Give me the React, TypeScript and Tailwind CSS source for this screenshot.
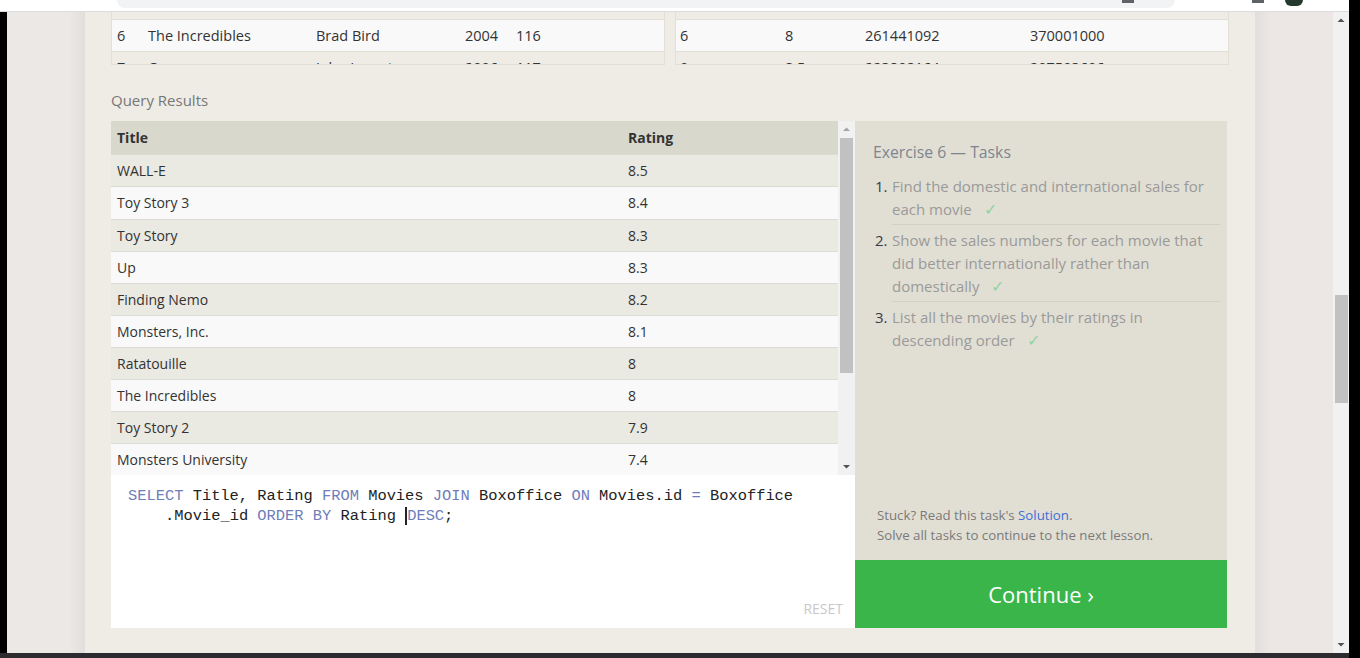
const movies = [
  { title: 'WALL-E', rating: '8.5' },
  { title: 'Toy Story 3', rating: '8.4' },
  { title: 'Toy Story', rating: '8.3' },
  { title: 'Up', rating: '8.3' },
  { title: 'Finding Nemo', rating: '8.2' },
  { title: 'Monsters, Inc.', rating: '8.1' },
  { title: 'Ratatouille', rating: '8' },
  { title: 'The Incredibles', rating: '8' },
  { title: 'Toy Story 2', rating: '7.9' },
  { title: 'Monsters University', rating: '7.4' },
  { title: 'Cars', rating: '7.2' },
  { title: 'Brave', rating: '7.2' },
]

const tasks = [
  'Find the domestic and international sales for each movie',
  'Show the sales numbers for each movie that did better internationally rather than domestically',
  'List all the movies by their ratings in descending order',
]

const sans = "font-['Open_Sans','Noto_Sans',sans-serif]"

function TopTables() {
  const left = [
    ['6', 'The Incredibles', 'Brad Bird', '2004', '116'],
    ['7', 'Cars', 'John Lasseter', '2006', '117'],
  ]
  const right = [
    ['6', '8', '261441092', '370001000'],
    ['9', '8.5', '223808164', '297503696'],
  ]
  const bg = (i: number) => (i === 0 ? 'bg-[#f9f9f9]' : 'bg-[#efece5]')
  return (
    <div className="flex h-[53px] gap-[10px] text-[14.5px] text-[#333]">
      <div className="h-full w-[554px] overflow-hidden border-x border-b border-[#e2dfd7]">
        <div className="h-[8px] border-b border-[#e2dfd7]" />
        {left.map((r, i) => (
          <div key={i} className={`flex h-[32px] items-center border-b border-[#e2dfd7] px-[5px] ${bg(i)}`}>
            <span className="w-[31px]">{r[0]}</span>
            <span className="w-[168px]">{r[1]}</span>
            <span className="w-[149px]">{r[2]}</span>
            <span className="w-[51px]">{r[3]}</span>
            <span>{r[4]}</span>
          </div>
        ))}
      </div>
      <div className="h-full w-[554px] overflow-hidden border-x border-b border-[#e2dfd7]">
        <div className="h-[8px] border-b border-[#e2dfd7]" />
        {right.map((r, i) => (
          <div key={i} className={`flex h-[32px] items-center border-b border-[#e2dfd7] px-[4px] ${bg(i)}`}>
            <span className="w-[105px]">{r[0]}</span>
            <span className="w-[80px]">{r[1]}</span>
            <span className="w-[165px]">{r[2]}</span>
            <span>{r[3]}</span>
          </div>
        ))}
      </div>
    </div>
  )
}

function ResultsTable() {
  return (
    <div className="flex h-[354px]">
      <div className="w-[727px] overflow-hidden text-[14px] text-[#333]">
        <div className="flex h-[33px] items-center bg-[#d9d8cd] px-[6px] font-bold">
          <span className="w-[511px]">Title</span>
          <span>Rating</span>
        </div>
        {movies.map((m, i) => (
          <div
            key={m.title}
            className={`flex items-center border-t border-[#dcdcd6] px-[6px] ${i === 1 ? 'h-[33px]' : 'h-[32px]'} ${i % 2 === 0 ? 'bg-[#eae9e2]' : 'bg-[#f9f9f9]'}`}
          >
            <span className="w-[511px]">{m.title}</span>
            <span>{m.rating}</span>
          </div>
        ))}
      </div>
      <div className="flex w-[17px] flex-col items-center bg-[#f1f1f1]">
        <svg width="17" height="17" viewBox="0 0 17 17">
          <path d="M5 10 L8.5 6.5 L12 10 Z" fill="#a3a3a3" />
        </svg>
        <div className="h-[235px] w-[13px] bg-[#c1c1c1]" />
        <div className="flex-1" />
        <svg width="17" height="17" viewBox="0 0 17 17">
          <path d="M5 7 L8.5 10.5 L12 7 Z" fill="#505050" />
        </svg>
      </div>
    </div>
  )
}

function Editor() {
  const kw = 'text-[#6f7db9]'
  return (
    <div className="relative h-[153px] bg-white">
      <div className="px-[17px] pt-[11px] font-['Liberation_Mono','DejaVu_Sans_Mono',monospace] text-[15.4px] leading-[20px] text-[#222]">
        <div className="whitespace-pre">
          <span className={kw}>SELECT</span> Title, Rating <span className={kw}>FROM</span> Movies{' '}
          <span className={kw}>JOIN</span> Boxoffice <span className={kw}>ON</span> Movies.id{' '}
          <span className={kw}>=</span> Boxoffice
        </div>
        <div className="whitespace-pre pl-[37px]">
          .Movie_id <span className={kw}>ORDER BY</span> Rating{' '}
          <span className="border-l-2 border-[#222]" />
          <span className={kw}>DESC</span>;
        </div>
      </div>
      <div className="absolute bottom-[9px] right-[12px] text-[14px] text-[#c9c9c9]">RESET</div>
    </div>
  )
}

function TaskPanel() {
  return (
    <div className="flex w-[372px] flex-col">
      <div className="flex h-[439px] flex-col bg-[#e1dfd4] pl-[18px] pr-[7px]">
        <h2 className="mt-[20px] text-[15.75px] font-normal text-[#7d8590]">Exercise 6 — Tasks</h2>
        <ol className="mt-[7px] text-[15px] leading-[23px] text-[#9a9a9a]">
          {tasks.map((t, i) => (
            <li key={i} className="flex pt-[4px]">
              <span className="w-[19px] pl-[2px] text-[#3a3a4a]">{i + 1}.</span>
              <div className={`flex-1 pr-[8px] ${i < 2 ? 'border-b border-[#d3d1c6] pb-[3px]' : ''}`}>
                {t}
                <span className="ml-[12px] text-[16px] text-[#90d49e]">✓</span>
              </div>
            </li>
          ))}
        </ol>
        <div className="flex-1" />
        <div className="mb-[15px] pl-[4px] text-[13.25px] leading-[20px] text-[#7a7a7a]">
          <p>
            Stuck? Read this task's <span className="text-[#3b6fd6]">Solution</span>.
          </p>
          <p>Solve all tasks to continue to the next lesson.</p>
        </div>
      </div>
      <button className="flex h-[68px] items-center justify-center pt-[2px] bg-[#3ab54a] text-[22px] text-white">
        Continue ›
      </button>
    </div>
  )
}

function BrowserChrome() {
  return (
    <div className="relative h-[12px] border-b border-[#dadce0] bg-white">
      <div className="absolute left-[117px] top-0 h-[8px] w-[1058px] rounded-b-full bg-[#f1f3f4]" />
      <div className="absolute left-[1122px] top-0 h-[3px] w-[12px] bg-[#5f6368]" />
      <div className="absolute left-[1252px] top-0 h-[3px] w-[12px] bg-[#5f6368]" />
      <div className="absolute left-[1285px] -top-[6px] h-[12px] w-[18px] rounded-full bg-[#253a2f]" />
    </div>
  )
}

export default function App() {
  return (
    <div className={`flex h-[658px] w-[1360px] overflow-hidden bg-black ${sans}`}>
      <div className="flex w-[1349px] flex-col">
        <BrowserChrome />
        <div className="flex flex-1 overflow-hidden">
          <div className="w-[7px] bg-black" />
          <div className="flex flex-1 bg-[#ece7e4]">
            <div className="w-[78px] bg-gradient-to-r from-[#ece8e5] from-80% to-[#e2dedb]" />
            <div className="w-[1170px] bg-[#efece5] px-[26px]">
              <TopTables />
              <div className="mt-[24px] text-[15px] text-[#777]">Query Results</div>
              <div className="mt-[9px] flex">
                <div className="flex w-[744px] flex-col">
                  <ResultsTable />
                  <Editor />
                </div>
                <TaskPanel />
              </div>
            </div>
            <div className="w-[78px] bg-gradient-to-r from-[#e2dedb] to-[#ece7e4] to-20%" />
          </div>
          <div className="flex w-[16px] flex-col items-center bg-[#f1f1f1]">
            <svg width="16" height="16" viewBox="0 0 16 16">
              <path d="M4.5 10 L8 6.5 L11.5 10 Z" fill="#505050" />
            </svg>
            <div className="mt-[267px] h-[108px] w-[13px] bg-[#c1c1c1]" />
            <div className="flex-1" />
            <svg width="16" height="16" viewBox="0 0 16 16">
              <path d="M4.5 6 L8 9.5 L11.5 6 Z" fill="#505050" />
            </svg>
          </div>
        </div>
        <div className="h-[5px] bg-[#2b2b30]" />
      </div>
    </div>
  )
}
